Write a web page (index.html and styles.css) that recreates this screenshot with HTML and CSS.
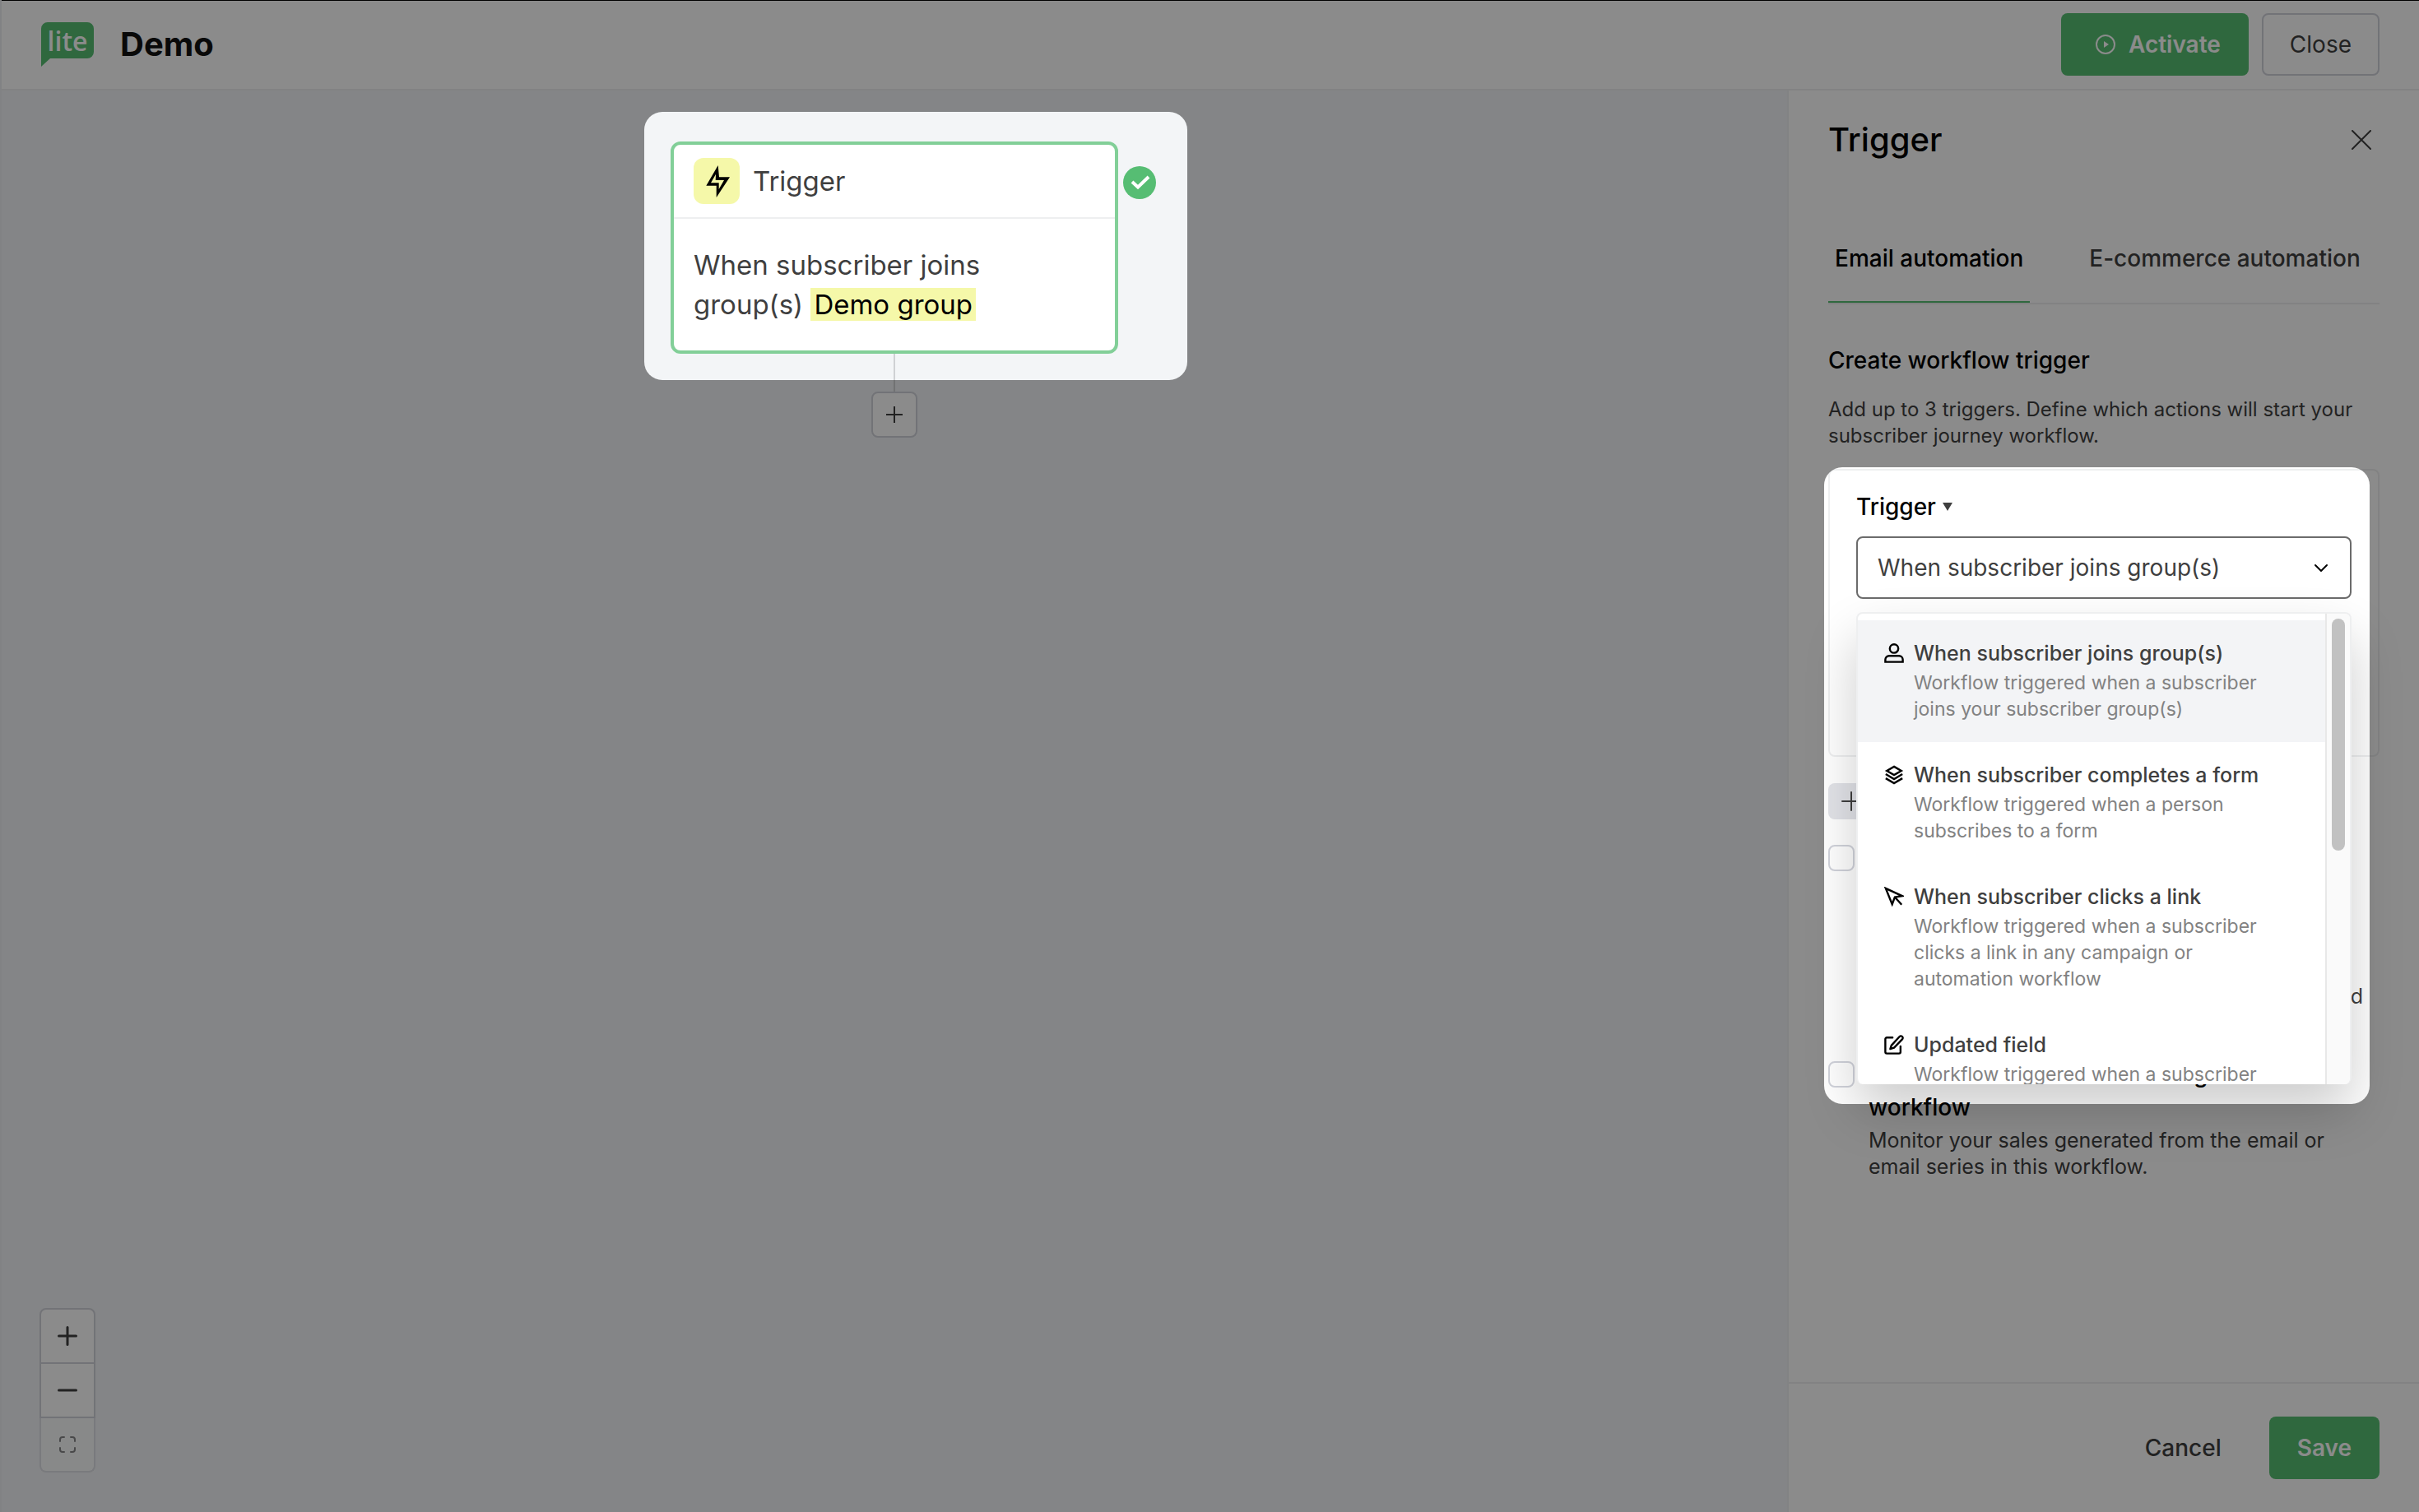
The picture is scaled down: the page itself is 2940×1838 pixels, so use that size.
FILE: index.html
```html
<!DOCTYPE html>
<html lang="en">
<head>
<meta charset="utf-8">
<meta name="viewport" content="width=device-width, initial-scale=1">
<title>Demo</title>
<link rel="stylesheet" href="styles.css">
</head>
<body>
<div class="app">
  <header class="topbar">
    <a class="logo" href="#" aria-label="lite">
      <svg width="64" height="54" viewBox="0 0 64 54" aria-hidden="true"><path fill="#56bf73" d="M8 0h48a8 8 0 0 1 8 8v28a8 8 0 0 1-8 8H11L0 54V8a8 8 0 0 1 8-8z"/></svg>
      <span class="logo-text">lite</span>
    </a>
    <h1 class="title">Demo</h1>
    <div class="actions">
      <button class="btn btn-primary btn-activate" type="button">
        <svg width="24" height="24" viewBox="0 0 24 24" fill="none" aria-hidden="true"><circle cx="12" cy="12" r="11" stroke="#fff" stroke-width="2"/><path fill="#fff" d="M10 8l6 4-6 4z"/></svg>
        Activate
      </button>
      <button class="btn btn-outline" type="button">Close</button>
    </div>
  </header>

  <div class="workspace">
    <main class="canvas">
      <div class="flow">
        <article class="node">
          <header class="node-head">
            <span class="node-icon">
              <svg width="32" height="40" viewBox="0 0 32 40" aria-hidden="true"><path fill-rule="evenodd" d="M17.700 1L19 15.300H32L15.700 40V25.700H3.300zM15 11.700L9 22.300h9.700V30L25 19H14.700z"/></svg>
            </span>
            Trigger
          </header>
          <p class="node-body">When subscriber joins group(s) <mark class="tag">Demo group</mark></p>
          <svg class="node-check" width="40" height="40" viewBox="0 0 40 40" fill="none" aria-hidden="true"><circle cx="20" cy="20" r="20" fill="#56bd73"/><path d="M11 19l7 6.500L31 13" stroke="#fff" stroke-width="4"/></svg>
        </article>
        <span class="connector"></span>
        <button class="add-step" type="button" aria-label="Add step">
          <svg width="20" height="20" viewBox="0 0 20 20" fill="none" stroke="#3f3f3f" stroke-width="2" aria-hidden="true"><path d="M10 0v20M0 10h20"/></svg>
        </button>
        <div class="spotlight spotlight-node"></div>
      </div>
      <div class="zoom">
        <button type="button" aria-label="Zoom in"><svg width="24" height="24" viewBox="0 0 24 24" fill="none" stroke="#3f3f3f" stroke-width="3" stroke-linecap="round" aria-hidden="true"><path d="M12 1.500v21M1.500 12h21"/></svg></button>
        <button type="button" aria-label="Zoom out"><svg width="24" height="24" viewBox="0 0 24 24" fill="none" stroke="#3f3f3f" stroke-width="3" stroke-linecap="round" aria-hidden="true"><path d="M1.500 12h21"/></svg></button>
        <button type="button" aria-label="Fit to screen" disabled><svg width="20" height="20" viewBox="0 0 20 20" fill="none" stroke="#3f3f3f" stroke-width="2" stroke-linecap="round" aria-hidden="true"><path d="M1 6V4a3 3 0 0 1 3-3h2M14 1h2a3 3 0 0 1 3 3v2M19 14v2a3 3 0 0 1-3 3h-2M6 19H4a3 3 0 0 1-3-3v-2"/></svg></button>
      </div>
    </main>

    <aside class="panel">
      <header class="panel-head">
        <h2>Trigger</h2>
        <button class="close" type="button" aria-label="Close panel"><svg width="24" height="24" viewBox="0 0 24 24" fill="none" stroke="#3f3f3f" stroke-width="2" stroke-linecap="round" aria-hidden="true"><path d="M1 1l22 22M23 1L1 23"/></svg></button>
      </header>
      <div class="panel-body">
        <nav class="tabs">
          <a class="tab tab-active" href="#">Email automation</a>
          <a class="tab" href="#">E-commerce automation</a>
        </nav>
        <h3 class="section-title">Create workflow trigger</h3>
        <p class="intro">Add up to 3 triggers. Define which actions will start your subscriber journey workflow.</p>

        <section class="trigger-box">
          <label class="field-label" for="trigger">Trigger
            <svg width="12" height="10" viewBox="0 0 12 10" fill="#3f3f3f" aria-hidden="true"><path d="M0 0h12L6 10z"/></svg>
          </label>
          <div class="field">
            <select class="select" id="trigger"><option>When subscriber joins group(s)</option></select>
            <svg class="chevron" width="18" height="12" viewBox="0 0 18 12" fill="none" stroke="#000" stroke-width="2" stroke-linecap="round" stroke-linejoin="round" aria-hidden="true"><path d="M2 2l7 7 7-7"/></svg>
            <div class="menu">
              <ul class="menu-list">
                <li class="option option-active">
                  <svg width="24" height="24" viewBox="0 0 26 26" fill="none" stroke="#000" stroke-width="2.600" aria-hidden="true"><circle cx="13" cy="7" r="5.600"/><path d="M1.500 24.500v-3a5 5 0 0 1 5-5h13a5 5 0 0 1 5 5v3z"/></svg>
                  <div><h4>When subscriber joins group(s)</h4><p>Workflow triggered when a subscriber joins your subscriber group(s)</p></div>
                </li>
                <li class="option">
                  <svg width="24" height="24" viewBox="0 0 26 26" fill="none" stroke="#000" stroke-width="2.600" aria-hidden="true"><path d="M13 2l9.500 5.500L13 13 3.500 7.500zM2 12l11 6.500L24 12M2 17.500L13 24l11-6.500"/></svg>
                  <div><h4>When subscriber completes a form</h4><p>Workflow triggered when a person subscribes to a form</p></div>
                </li>
                <li class="option">
                  <svg width="24" height="24" viewBox="0 0 26 26" fill="none" stroke="#000" stroke-width="2.600" aria-hidden="true"><path d="M2 2l8.500 21 3.500-9.500L23.500 12zM14 13.500l9 10"/></svg>
                  <div><h4>When subscriber clicks a link</h4><p>Workflow triggered when a subscriber clicks a link in any campaign or automation workflow</p></div>
                </li>
                <li class="option">
                  <svg width="24" height="24" viewBox="0 0 26 26" fill="none" stroke="#000" stroke-width="2.600" stroke-linecap="round" stroke-linejoin="round" aria-hidden="true"><path d="M11 3.500H3.500a2 2 0 0 0-2 2v17a2 2 0 0 0 2 2h16a2 2 0 0 0 2-2V15M20 2.500a2.500 2.500 0 0 1 4 3L13 17l-5 1.500L9.500 14z"/></svg>
                  <div><h4>Updated field</h4><p>Workflow triggered when a subscriber</p></div>
                </li>
              </ul>
              <div class="scrollbar"><span class="thumb"></span></div>
            </div>
          </div>
        </section>

        <button class="add-trigger" type="button" aria-label="Add trigger"><svg width="24" height="24" viewBox="0 0 24 24" fill="none" stroke="#3f3f3f" stroke-width="2" stroke-linecap="round" aria-hidden="true"><path d="M12 1v22M1 12h22"/></svg></button>

        <div class="check-row">
          <input type="checkbox" id="repeat" aria-labelledby="repeat-text">
          <p class="covered-text" id="repeat-text">d</p>
        </div>
        <div class="check-row">
          <input type="checkbox" id="sales">
          <div>
            <label for="sales">Measure e-commerce tracking for this workflow</label>
            <p>Monitor your sales generated from the email or email series in this workflow.</p>
          </div>
        </div>
        <div class="spotlight spotlight-menu"></div>
      </div>
      <footer class="panel-foot">
        <button class="btn" type="button">Cancel</button>
        <button class="btn btn-primary" type="button">Save</button>
      </footer>
    </aside>
  </div>
</div>
</body>
</html>
```

FILE: styles.css
```css
:root {
  --dim: rgba(0, 0, 0, .455);
  --green: #56bf73;
  --ink: #3f3f3f;
  --line: #eeeff0;
  --border: #d1d3db;
}

* { box-sizing: border-box; }

body, h1, h2, h3, h4, p, ul { margin: 0; padding: 0; }

body {
  font-family: Inter, "Liberation Sans", sans-serif;
  font-size: 24px;
  line-height: 32px;
  color: var(--ink);
  background: #fff;
}

button, select, input { font: inherit; color: inherit; margin: 0; }
a { color: inherit; text-decoration: none; }
svg { display: block; flex: none; }

.app {
  display: flex;
  flex-direction: column;
  height: 100vh;
  border-left: 2px solid #818284;
}

/* Top bar */
.topbar {
  position: relative;
  display: flex;
  align-items: center;
  padding: 15px 48px 16px;
  border-top: 1px solid #000;
  border-bottom: 2px solid var(--line);
}
.topbar::after {
  content: "";
  position: absolute;
  inset: 0 0 -2px;
  background: var(--dim);
  pointer-events: none;
}
.logo { position: relative; color: #fff; }
.logo-text {
  position: absolute;
  inset: 0 0 auto;
  text-align: center;
  font: 600 32px/46px "Open Sans", sans-serif;
}
.title {
  margin-left: 32px;
  font-size: 40px;
  line-height: 48px;
  font-weight: 700;
  color: #111;
}
.actions { display: flex; gap: 16px; margin-left: auto; }

.btn {
  display: flex;
  align-items: center;
  justify-content: center;
  height: 76px;
  padding: 0 32px;
  border: 2px solid transparent;
  border-radius: 8px;
  background: none;
  font-size: 28px;
  font-weight: 500;
}
.btn-primary { background: var(--green); color: #fff; font-weight: 600; }
.btn-outline { border-color: var(--border); font-weight: 400; }
.btn-activate { gap: 16px; padding-left: 40px; }

.workspace { display: flex; flex: 1; min-height: 0; }

/* Canvas */
.canvas {
  position: relative;
  flex: 1;
  overflow: hidden;
  background: #f3f5f7;
}
.flow {
  position: relative;
  display: flex;
  flex-direction: column;
  align-items: center;
  padding-top: 62px;
}
.node {
  position: relative;
  width: 544px;
  border: 4px solid #82cf98;
  border-radius: 12px;
  background: #fff;
  font-size: 33px;
  line-height: 48px;
}
.node-head {
  display: flex;
  align-items: center;
  gap: 16px;
  padding: 16px 24px;
  border-bottom: 2px solid var(--line);
}
.node-icon {
  display: flex;
  align-items: center;
  justify-content: center;
  width: 56px;
  height: 56px;
  border-radius: 12px;
  background: #f5f8a9;
}
.node-body { padding: 32px 80px 32px 24px; }
.tag { padding: 0 4px; background: #f5f8a9; color: #000; }
.node-check { position: absolute; top: 26px; left: 546px; }
.connector { width: 2px; height: 46px; background: #cfd1d4; }
.add-step {
  display: flex;
  align-items: center;
  justify-content: center;
  width: 56px;
  height: 56px;
  padding: 0;
  border: 2px solid var(--border);
  border-radius: 8px;
  background: #fff;
}

.zoom {
  position: absolute;
  left: 46px;
  bottom: 48px;
  display: flex;
  flex-direction: column;
}
.zoom button {
  display: flex;
  align-items: center;
  justify-content: center;
  width: 68px;
  height: 68px;
  padding: 0;
  border: 2px solid var(--border);
  background: #fff;
}
.zoom button + button { margin-top: -2px; }
.zoom button:first-child { border-radius: 8px 8px 0 0; }
.zoom button:last-child { border-radius: 0 0 8px 8px; border-top: 0; height: 66px; margin-top: 0; opacity: .6; }

/* Guided-tour cut-outs: the shadow darkens all that lies round them */
.spotlight {
  position: absolute;
  z-index: 5;
  border-radius: 22px;
  box-shadow: 0 0 0 4000px var(--dim);
  pointer-events: none;
}
.spotlight-node { top: 26px; left: calc(50% - 304px); width: 660px; height: 326px; }
.spotlight-menu { top: 374px; left: -5px; right: 12px; height: 774px; }

/* Panel */
.panel {
  position: relative;
  display: flex;
  flex-direction: column;
  width: 768px;
  overflow: hidden;
  border-left: 2px solid #828384;
  background: #fff;
}
.panel-head {
  display: flex;
  align-items: center;
  justify-content: space-between;
  padding: 36px 48px 0;
}
.panel-head h2 { font-size: 40px; line-height: 48px; font-weight: 500; color: #000; }
.close { padding: 8px 10px; border: 0; background: none; }

.panel-body { position: relative; flex: 1; min-height: 0; margin: 0 48px; }
.tabs {
  display: flex;
  gap: 64px;
  padding-top: 100px;
  border-bottom: 2px solid var(--line);
  font-size: 28px;
  line-height: 40px;
  font-weight: 500;
}
.tab { padding: 0 8px 32px; border-bottom: 2px solid transparent; }
.tab-active { border-color: var(--green); color: #000; }
.section-title {
  margin-top: 48px;
  font-size: 28px;
  line-height: 40px;
  font-weight: 500;
  color: #000;
}
.intro { margin-top: 24px; }

.trigger-box {
  min-height: 350px;
  margin-top: 24px;
  padding: 24px 32px;
  border: 2px solid var(--line);
  border-radius: 8px;
}
.field-label {
  display: flex;
  align-items: center;
  gap: 8px;
  font-size: 28px;
  line-height: 40px;
  font-weight: 500;
  color: #000;
}
.field { position: relative; margin-top: 16px; }
.select {
  display: block;
  width: 100%;
  height: 76px;
  padding: 0 24px;
  border: 2px solid #6b6b6b;
  border-radius: 8px;
  appearance: none;
  background: transparent;
  font-size: 28px;
}
.chevron { position: absolute; top: 33px; right: 28px; }

.menu {
  position: absolute;
  z-index: 2;
  top: 92px;
  left: 0;
  right: 0;
  display: flex;
  height: 574px;
  border: 2px solid var(--line);
  border-bottom: 0;
  border-radius: 8px;
  background: #fff;
  box-shadow: 0 32px 64px rgba(0, 0, 0, .2);
  overflow: hidden;
}
.menu-list { flex: 1; min-width: 0; padding-top: 8px; list-style: none; }
.option {
  display: flex;
  gap: 12px;
  padding: 24px 64px 24px 32px;
  color: #828282;
  font-size: 23px;
}
.option svg { margin-top: 4px; }
.option-active { background: #f3f4f6; }
.option h4 { margin-bottom: 4px; font-size: 25px; line-height: 32px; font-weight: 500; color: var(--ink); white-space: nowrap; }
.scrollbar { flex: none; width: 30px; padding: 6px; border-left: 2px solid #e8e8e8; background: #fafafa; }
.thumb { display: block; width: 16px; height: 282px; border-radius: 8px; background: #c1c1c1; }

.add-trigger {
  display: flex;
  align-items: center;
  width: 160px;
  height: 44px;
  margin-top: 32px;
  padding: 0 16px;
  border: 0;
  border-radius: 8px;
  background: #e2e3e8;
}

.check-row {
  display: flex;
  align-items: flex-start;
  gap: 17px;
  margin-top: 27px;
  font-size: 25px;
}
.check-row input {
  flex: none;
  width: 32px;
  height: 32px;
  margin-top: 4px;
  appearance: none;
  border: 2px solid var(--border);
  border-radius: 8px;
  background: #fff;
}
.check-row label {
  display: block;
  margin-bottom: 4px;
  font-size: 28px;
  line-height: 40px;
  font-weight: 500;
  color: #000;
}
.covered-text { flex: 1; padding: 172px 20px 32px 0; text-align: right; }

.panel-foot {
  display: flex;
  justify-content: flex-end;
  gap: 24px;
  padding: 40px 48px;
  border-top: 2px solid var(--line);
}
```
